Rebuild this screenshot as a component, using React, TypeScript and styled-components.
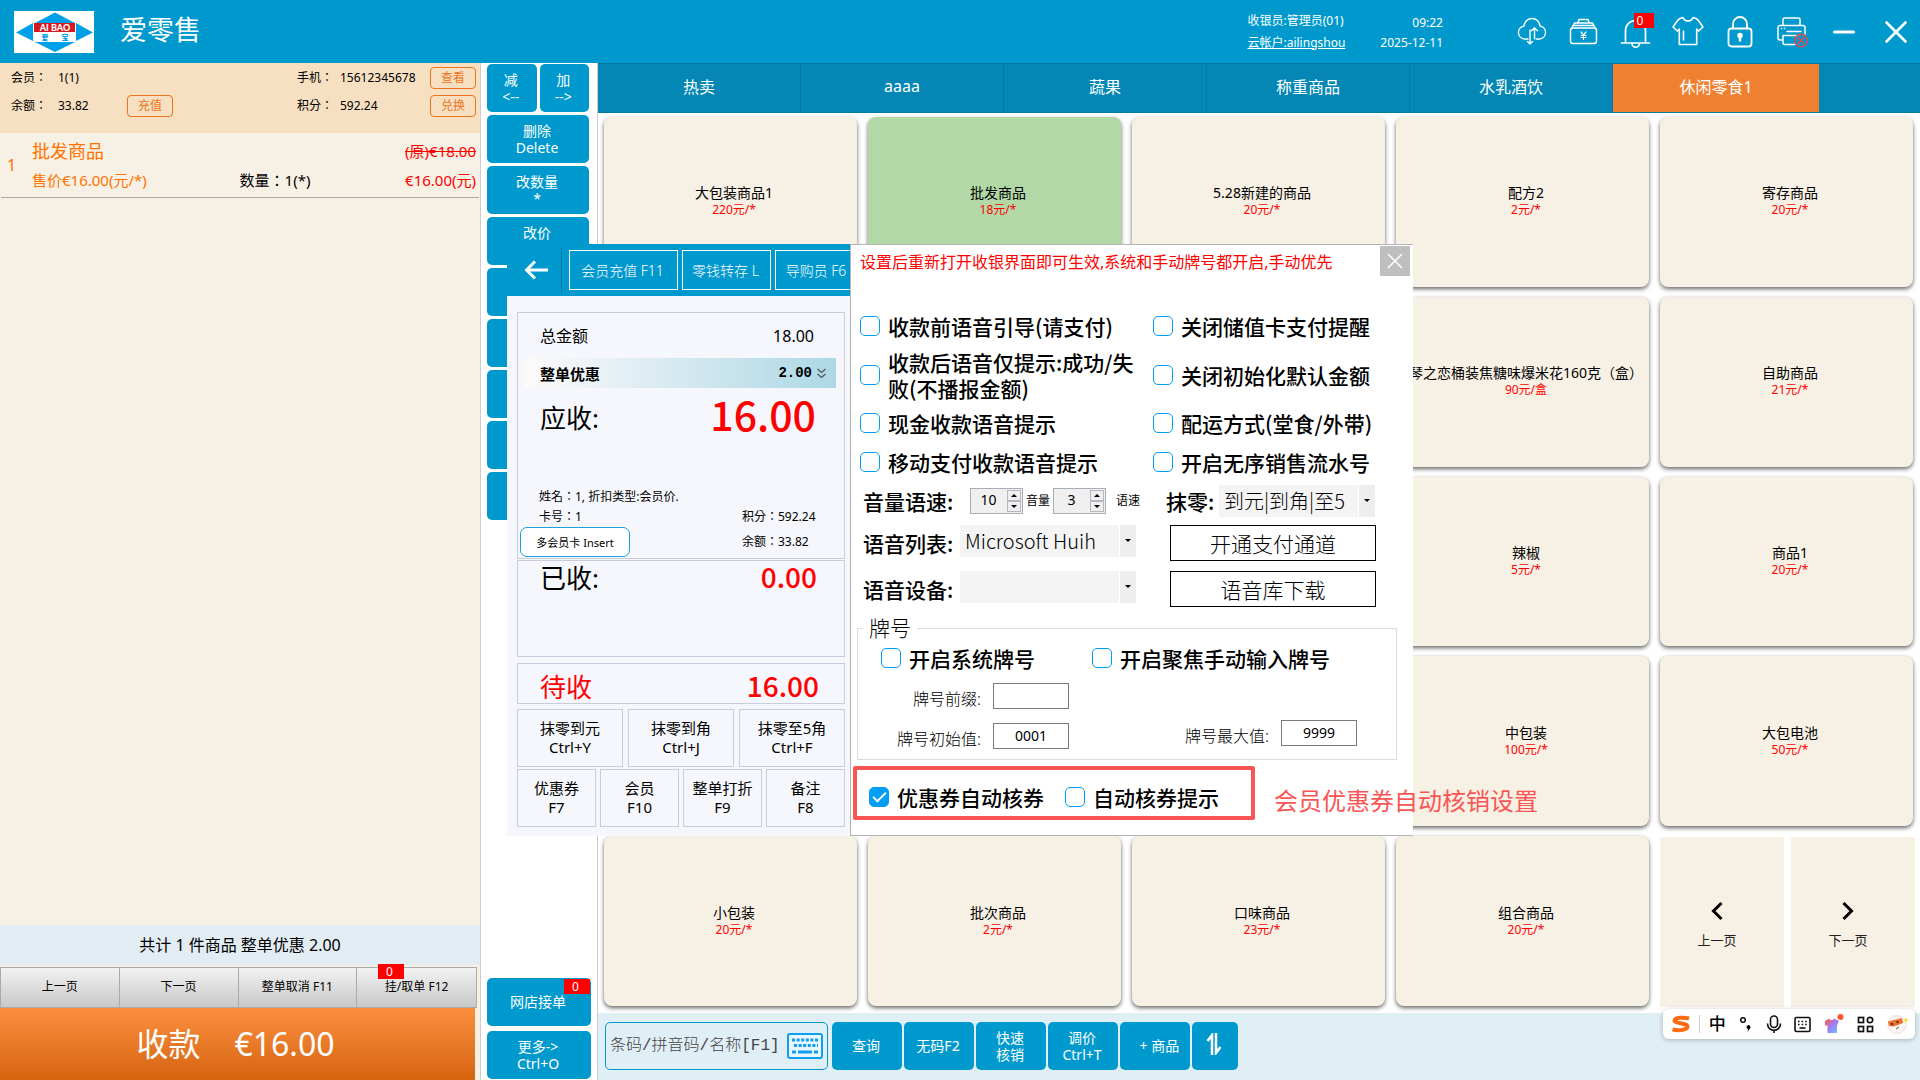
import React, { ReactNode } from "react";
import styled, { createGlobalStyle, css } from "styled-components";

const blue = "#0099ce";
const cream = "#f7f0e4";
const line = "#c9ccda";

const GlobalStyle = createGlobalStyle`
  *, *::before, *::after { box-sizing: border-box; }
  body { margin: 0; overflow: hidden; }
  body, button, input, select {
    font-family: "Noto Sans", "Noto Sans CJK SC", sans-serif;
  }
  button { border: 0; padding: 0; cursor: pointer; }
`;

const Page = styled.div`
  position: relative;
  display: flex;
  flex-direction: column;
  height: 100vh;
  background: #fff;
  color: #000;
  font-size: 14px;
  line-height: 20px;
`;

/* ---------- header ---------- */
const Header = styled.header`
  flex: none;
  display: flex;
  align-items: center;
  height: 63px;
  padding: 0 8px 0 14px;
  background: ${blue};
  color: #fff;
`;
const Logo = styled.svg`
  width: 80px;
  height: 42px;
`;
const Brand = styled.h1`
  flex: 1;
  margin: 0 0 4px 26px;
  font-size: 27px;
  line-height: 36px;
  font-weight: 400;
`;
const HeaderInfo = styled.div<{ $right?: boolean }>`
  display: flex;
  flex-direction: column;
  justify-content: ${(p) => (p.$right ? "flex-end" : "center")};
  gap: ${(p) => (p.$right ? 0 : 2)}px;
  font-size: 12px;
  text-align: ${(p) => (p.$right ? "right" : "left")};
  a { color: #fff; }
`;
const HeaderInfos = styled.div`
  display: flex;
  gap: 35px;
  margin-right: 73px;
`;
const HeaderIcons = styled.nav`
  display: flex;
  gap: 20px;
`;
const IconButton = styled.button`
  position: relative;
  width: 32px;
  height: 32px;
  background: none;
  color: #fff;
  svg { display: block; }
`;
const Badge = styled.span<{ $top: number; $right: number; $wide?: boolean }>`
  position: absolute;
  top: ${(p) => p.$top}px;
  right: ${(p) => p.$right}px;
  width: ${(p) => (p.$wide ? 26 : 20)}px;
  height: 15px;
  background: #f00;
  color: #fff;
  font-size: 12px;
  line-height: 15px;
  text-align: center;
  padding-right: ${(p) => (p.$wide ? 3 : 8)}px;
`;

/* ---------- body columns ---------- */
const Body = styled.div`
  flex: 1;
  min-height: 0;
  display: flex;
`;
const Cart = styled.section`
  flex: none;
  display: flex;
  flex-direction: column;
  width: 481px;
  border-right: 1px solid #ccc;
  background: ${cream};
`;
const Member = styled.div`
  display: grid;
  grid-template-columns: 47px 69px 170px 43px 90px 46px;
  grid-auto-rows: 28px;
  align-items: center;
  height: 70px;
  padding: 1px 4px 0 11px;
  background: #f7e0c1;
  font-family: "Noto Sans", "Noto Sans CJK TC", sans-serif;
  font-size: 12px;
  button { justify-self: start; }
`;
const OutlineButton = styled.button`
  width: 46px;
  height: 22px;
  border: 1px solid #ec7420;
  border-radius: 4px;
  background: transparent;
  color: #ec7420;
  font-size: 12px;
  line-height: 20px;
`;
const CartItem = styled.article`
  display: grid;
  grid-template-columns: 25px 1fr auto 1fr;
  align-items: center;
  height: 65px;
  margin: 0 1px;
  padding: 3px 3px 3px 6px;
  border-bottom: 1px solid #aaa;
  font-family: "Noto Sans", "Noto Sans CJK TC", sans-serif;
  font-size: 15px;
  line-height: 28px;
`;
const ItemNo = styled.span`
  grid-row: span 2;
  color: #ff7300;
  font-size: 16px;
`;
const ItemName = styled.strong`
  grid-column: span 2;
  color: #ff7300;
  font-family: "Noto Sans", "Noto Sans CJK SC", sans-serif;
  font-size: 18px;
  font-weight: 400;
`;
const ItemPrice = styled.span<{ $color: string; $end?: boolean }>`
  color: ${(p) => p.$color};
  text-align: ${(p) => (p.$end ? "right" : "left")};
`;
const Quantity = styled(ItemPrice)`
  padding-left: 42px;
`;
const Summary = styled.div`
  height: 40px;
  margin-top: auto;
  background: #e2edf3;
  font-size: 16px;
  line-height: 40px;
  text-align: center;
`;
const PagerRow = styled.div`
  display: grid;
  grid-template-columns: repeat(4, 1fr);
  height: 41px;
  margin: 2px 3px 0 0;
  border: 1px solid #aaa;
`;
const GreyButton = styled.button`
  position: relative;
  padding-bottom: 3px;
  border-right: 1px solid #aaa;
  background: linear-gradient(#f2f2f2, #c8c8c8);
  font-size: 12px;
  &:last-child { border-right: 0; }
`;
const PayButton = styled.button`
  display: flex;
  align-items: center;
  justify-content: center;
  gap: 34px;
  height: 72px;
  margin-right: 5px;
  padding-right: 4px;
  background: linear-gradient(#fb8f3f, #d56410);
  color: #fff;
  font-size: 32px;
  line-height: 40px;
`;

/* ---------- action column ---------- */
const Actions = styled.section`
  flex: none;
  display: grid;
  grid-template-columns: 1fr 1fr;
  grid-auto-rows: 48px;
  gap: 3px;
  align-content: start;
  width: 117px;
  padding: 1px 8px 0 6px;
  border-right: 1px solid #ccc;
`;
const ActionButton = styled.button<{ $half?: boolean }>`
  position: relative;
  grid-column: ${(p) => (p.$half ? "auto" : "span 2")};
  padding: 0 2px 1px 0;
  border-radius: 5px;
  background: ${blue};
  color: #fff;
  font-size: 14px;
  line-height: 17px;
  white-space: pre-line;
`;
const ActionsColumn = styled.div`
  display: flex;
  flex-direction: column;
`;
const ActionsFoot = styled.div`
  flex: 1;
  display: flex;
  flex-direction: column;
  justify-content: flex-end;
  gap: 5px;
  padding: 0 6px 1px 6px;
  border-right: 1px solid #ccc;
  button { height: 48px; }
`;

/* ---------- catalogue ---------- */
const Catalogue = styled.main`
  flex: 1;
  min-width: 0;
  display: flex;
  flex-direction: column;
`;
const Tabs = styled.nav`
  flex: none;
  display: flex;
  height: 50px;
  border: solid #0577a3;
  border-width: 1px 0;
  background: #0587b5;
`;
const Tab = styled.button<{ $active?: boolean }>`
  width: ${(p) => (p.$active ? 206 : 203)}px;
  padding-bottom: 4px;
  border-right: ${(p) => (p.$active ? "0" : "1px solid #0577a3")};
  background: ${(p) => (p.$active ? "#ef7f31" : "transparent")};
  color: #fff;
  font-size: 16px;
`;
const Tiles = styled.div`
  flex: 1;
  display: grid;
  grid-template-columns: repeat(5, 1fr);
  grid-template-rows: repeat(5, 1fr);
  gap: 10px 11px;
  padding: 4px 7px 7px 6px;
`;
const Tile = styled.button<{ $selected?: boolean }>`
  display: flex;
  flex-direction: column;
  align-items: center;
  justify-content: center;
  min-width: 0;
  padding-left: 7px;
  border-radius: 8px;
  background: ${(p) => (p.$selected ? "#b1d8a6" : cream)};
  box-shadow: 0 2px 4px rgba(0, 0, 0, 0.6);
  font-size: 14px;
  line-height: 17px;
  white-space: nowrap;
  small { color: #f00; font-size: 12px; line-height: 18px; }
`;
const TilePager = styled.div`
  display: grid;
  grid-template-columns: 1fr 1fr;
  gap: 7px;
  margin: 1px -2px -1px 0;
`;
const TilePagerButton = styled.button`
  display: flex;
  flex-direction: column;
  align-items: center;
  justify-content: center;
  gap: 9px;
  padding: 6px 10px 0 0;
  background: ${cream};
  color: #222;
  font-size: 13px;
  line-height: 20px;
`;
const BottomBar = styled.div`
  flex: none;
  display: flex;
  align-items: flex-start;
  gap: 2px;
  height: 67px;
  padding: 9px 7px;
  background: #e0eef5;
  button { width: 70px; height: 48px; }
  button:last-child { width: 46px; }
`;
const SearchBox = styled.label`
  display: flex;
  align-items: center;
  width: 223px;
  height: 48px;
  margin-right: 2px;
  padding: 0 4px;
  border: 1px solid ${blue};
  border-radius: 5px;
`;
const SearchInput = styled.input`
  flex: 1;
  min-width: 0;
  padding: 0;
  border: 0;
  background: none;
  font-family: "Liberation Mono", "Noto Sans CJK SC", monospace;
  font-size: 16px;
  font-weight: 300;
  &::placeholder { color: #444; }
`;

/* ---------- dialogs ---------- */
const Overlay = styled.div`
  position: absolute;
  top: 244px;
  left: 507px;
  display: flex;
  height: 592px;
`;
const Cashier = styled.section`
  width: 343px;
  overflow: hidden;
  background: #f5f7fc;
`;
const CashierBar = styled.div`
  display: flex;
  align-items: center;
  gap: 4px;
  height: 52px;
  background: ${blue};
`;
const BackButton = styled.button`
  flex: none;
  width: 55px;
  height: 46px;
  margin-right: 3px;
  padding-left: 17px;
  border-right: 1px solid #057bad;
  background: none;
  color: #fff;
  svg { display: block; }
`;
const BarButton = styled.button<{ $width: number }>`
  flex: none;
  width: ${(p) => p.$width}px;
  height: 40px;
  padding-right: 2px;
  border: 1px solid #fff;
  background: none;
  color: #fff;
  font-size: 14px;
  font-weight: 300;
`;
const CashierBody = styled.div`
  padding: 16px 5px 0 10px;
`;
const Box = styled.div<{ $height: number; $gap?: number }>`
  height: ${(p) => p.$height}px;
  margin-bottom: ${(p) => p.$gap ?? 0}px;
  border: 1px solid ${line};
`;
const Row = styled.div<{ $height: number; $size: number; $red?: boolean; $end?: number }>`
  display: flex;
  justify-content: space-between;
  align-items: center;
  height: ${(p) => p.$height}px;
  padding: 0 ${(p) => p.$end ?? 30}px 0 22px;
  font-size: ${(p) => p.$size}px;
  color: ${(p) => (p.$red ? "#f00" : "#000")};
`;
const Discount = styled.button`
  display: flex;
  align-items: center;
  width: 312px;
  height: 30px;
  margin: 0 6px;
  padding: 0 10px 0 16px;
  background: linear-gradient(90deg, #fdfafa, #add8e6);
  font-size: 15px;
  font-weight: 700;
  span { flex: 1; text-align: left; }
  b { margin-right: 5px; font-family: "Liberation Mono", monospace; font-size: 14px; }
`;
const Figure = styled.span<{ $size: number }>`
  padding-bottom: ${(p) => (p.$size > 40 ? 10 : 4)}px;
  color: #f00;
  font-family: "Noto Sans CJK SC", sans-serif;
  font-size: ${(p) => p.$size}px;
  font-weight: 500;
  line-height: 48px;
`;
const MemberCard = styled.div`
  display: grid;
  grid-template-columns: 203px 1fr;
  align-items: center;
  margin-top: 39px;
  padding-left: 21px;
  font-family: "Noto Sans", "Noto Sans CJK TC", sans-serif;
  font-size: 12px;
  line-height: 20px;
  p { grid-column: span 2; margin: 0; }
`;
const MultiCard = styled.button`
  width: 110px;
  height: 30px;
  margin-left: -19px;
  border: 1px solid #1ba1e2;
  border-radius: 7px;
  background: #fff;
  font-size: 11px;
`;
const KeyRow = styled.div<{ $cols: number }>`
  display: grid;
  grid-template-columns: repeat(${(p) => p.$cols}, 1fr);
  gap: 4px;
  margin-top: 2px;
  ${(p) => p.$cols === 3 && css`gap: 5px; margin-top: 5px;`}
`;
const KeyButton = styled.button`
  height: 58px;
  padding-bottom: 1px;
  border: 1px solid ${line};
  background: transparent;
  font-size: 15px;
  line-height: 19px;
  white-space: pre-line;
`;

const Settings = styled.section`
  width: 563px;
  border: solid #b4b4b4;
  border-width: 1px 0 1px 1px;
  background: #fff;
`;
const SettingsHead = styled.div`
  display: flex;
  justify-content: space-between;
  height: 61px;
  padding: 1px 3px 0 9px;
  color: #f00;
  font-size: 16px;
  line-height: 32px;
`;
const CloseButton = styled.button`
  width: 30px;
  height: 30px;
  background: #bfbfbf;
  color: #fff;
  svg { display: block; margin: auto; }
`;
const OptionGrid = styled.div`
  display: grid;
  grid-template-columns: 293px 1fr;
  grid-template-rows: 40px 58px 38px 40px 38px 46px 46px;
  align-items: center;
  padding-left: 9px;
`;
const Check = styled.label`
  display: flex;
  align-items: center;
  gap: 8px;
  font-size: 21px;
  font-weight: 500;
  line-height: 26px;
  font-family: "Noto Sans CJK SC", sans-serif;
`;
const CheckInput = styled.input.attrs({ type: "checkbox" })`
  flex: none;
  appearance: none;
  display: grid;
  place-items: center;
  width: 20px;
  height: 20px;
  margin: 0;
  border: 1px solid #009ff5;
  border-radius: 5px;
  background: #fff;
  &:checked { background: #009ff5; }
  &:checked::after {
    content: "";
    width: 13px;
    height: 7px;
    border: solid #fff;
    border-width: 0 0 2px 2px;
    rotate: -45deg;
    margin-bottom: 4px;
  }
`;
const Field = styled.div`
  display: flex;
  align-items: center;
  padding-left: 3px;
`;
const FieldLabel = styled.label<{ $width: number; $indent?: boolean }>`
  width: ${(p) => p.$width}px;
  padding-left: ${(p) => (p.$indent ? 10 : 0)}px;
  font-family: "Noto Sans CJK SC", sans-serif;
  font-size: 21px;
  font-weight: 500;
`;
const UnitLabel = styled.label<{ $wide?: boolean }>`
  width: ${(p) => (p.$wide ? 34 : 30)}px;
  font-size: 12px;
  text-align: ${(p) => (p.$wide ? "right" : "center")};
`;
const Stepper = styled.span`
  display: grid;
  grid-template: 11px 11px / 1fr 14px;
  width: 53px;
  padding: 1px;
  border: 1px solid #a9adb5;
  background: #f0f0f0;
  input {
    grid-row: span 2;
    min-width: 0;
    padding: 0 2px 3px 0;
    border: 0;
    background: none;
    font-size: 14px;
    text-align: center;
  }
  button {
    display: grid;
    place-items: center;
    border: 1px solid #b5b8be;
  }
  svg { display: block; }
`;
const SelectWrap = styled.span<{ $width: number; $raised?: boolean }>`
  position: relative;
  width: ${(p) => p.$width}px;
  height: 32px;
  margin-bottom: ${(p) => (p.$raised ? 5 : 0)}px;
  select {
    appearance: none;
    width: 100%;
    height: 100%;
    padding: 0 18px 0 5px;
    border: 0;
    background: linear-gradient(90deg, #f4f4f4 calc(100% - 17px), #fff calc(100% - 17px), #fff calc(100% - 16px), #eee calc(100% - 16px));
    font-family: "Noto Sans CJK SC", sans-serif;
    font-size: 20px;
    font-weight: 300;
    line-height: 32px;
  }
  svg { position: absolute; right: 5px; top: 14px; pointer-events: none; }
`;
const WideButton = styled.button`
  width: 206px;
  height: 36px;
  margin-left: 17px;
  border: 1px solid #000;
  background: #fff;
  font-size: 21px;
  font-weight: 300;
`;
const PlateSet = styled.fieldset`
  display: grid;
  grid-template-columns: 211px 1fr;
  grid-template-rows: 36px 40px 40px;
  align-items: center;
  width: 540px;
  margin: 4px 0 0 6px;
  padding: 0 28px 3px 23px;
  border: 1px solid #dcdcdc;
  legend { margin-left: -18px; padding: 0 6px; font-size: 21px; font-weight: 300; line-height: 24px; }
`;
const PlateField = styled.label<{ $wide?: boolean }>`
  grid-column: ${(p) => (p.$wide ? "1" : "auto")};
  display: flex;
  align-items: flex-end;
  justify-content: flex-end;
  gap: 12px;
  margin: ${(p) => (p.$wide ? "0 23px 0 0" : "0 11px 6px 0")};
  font-size: 16px;
  font-weight: 300;
  white-space: nowrap;
  input {
    width: 76px;
    height: 26px;
    padding-bottom: 3px;
    border: 1px solid #7a7a7a;
    font-size: 14px;
    text-align: center;
  }
`;
const SettingsFoot = styled.div`
  display: flex;
  align-items: center;
  gap: 19px;
  margin: 6px 0 0 2px;
  white-space: nowrap;
`;
const Highlight = styled.div`
  flex: none;
  display: flex;
  gap: 21px;
  width: 402px;
  height: 54px;
  padding: 14px 0 0 12px;
  border: 4px solid #fa5555;
  border-radius: 2px;
  label { height: 26px; }
`;
const Note = styled.p`
  margin: 15px 0 0;
  color: #fa5555;
  font-size: 24px;
  line-height: 36px;
`;

/* ---------- input-method bar ---------- */
const ImeBar = styled.div`
  position: absolute;
  right: 5px;
  bottom: 41px;
  display: flex;
  align-items: center;
  justify-content: space-between;
  width: 252px;
  height: 30px;
  padding: 0 6px 0 8px;
  border-radius: 6px;
  background: #fff;
  box-shadow: 0 1px 5px rgba(0, 0, 0, 0.25);
  font-size: 17px;
  font-weight: 500;
`;
const ImeLogo = styled.span`
  display: flex;
  padding-right: 8px;
  margin-right: -4px;
  border-right: 1px solid #ccc;
`;

/* ---------- drawings ---------- */
const Icon = ({ children, w = 1.6 }: { children: ReactNode; w?: number }) => (
  <svg width="32" height="32" viewBox="0 0 32 32" fill="none" stroke="currentColor" strokeWidth={w} strokeLinecap="round" strokeLinejoin="round">
    {children}
  </svg>
);
const CloudIcon = () => (
  <Icon w={1.4}>
    <path d="M12 23H8.500a6.500 6.500 0 0 1-.6-12.900C8.500 5.500 12 2.500 16 2.500s7.500 3 8.100 7.600A6.500 6.500 0 0 1 23.500 23H20" />
    <path d="M14 14v14M11.500 25.500L14 28l2.500-2.500M18.500 22.500V12M15.500 14.700l3-3 3 3" />
  </Icon>
);
const PurseIcon = () => (
  <Icon w={1.5}>
    <rect x="2.500" y="12" width="26" height="15.500" rx="2.500" />
    <path d="M4 11.500l2.500-4.500h18l2.500 4.500M5 9.500h21M10 6.500l1-3h9l1 3" />
    <path d="M13 16l2.500 3 2.500-3M15.500 19v4.500M13 19.500h5M13 21.500h5" strokeWidth="1.200" />
  </Icon>
);
const BellIcon = () => (
  <Icon w={1.7}>
    <path d="M1.500 27h28M5.500 27V14.500a10 10 0 0 1 20 0V27M12 27.500a3.700 3.700 0 0 0 7.400 0" />
  </Icon>
);
const ShirtIcon = () => (
  <Icon w={1.6}>
    <path d="M11 1.500c1.500 4.500 8.500 4.500 10 0 3 .3 4.500 1.500 5.800 3.500L31 11l-4.500 4-1.800-2v15.500H7.300V13l-1.800 2L1 11l4.200-6C6.500 3 8 1.800 11 1.500zM11.500 15v9" />
  </Icon>
);
const LockIcon = () => (
  <Icon w={1.8}>
    <rect x="4.500" y="12.500" width="23" height="18" rx="3" />
    <path d="M9 12V8a7 7 0 0 1 14 0v4" />
    <path d="M16 19.500v5" strokeWidth="2.500" />
    <circle cx="16" cy="19.500" r="1.800" fill="currentColor" />
  </Icon>
);
const PrinterIcon = () => (
  <Icon w={1.5}>
    <path d="M7 9V3.500A1.500 1.500 0 0 1 8.500 2h14A1.500 1.500 0 0 1 24 3.500V9M5.500 24H4a2 2 0 0 1-2-2V11.500a2 2 0 0 1 2-2h23a2 2 0 0 1 2 2V18M19 28.500H8.500A1.500 1.500 0 0 1 7 27v-7.500h15M11 15.500h14" />
    <path d="M5.500 12.500h.1M8.500 12.500h.1" />
    <g stroke="#e8474f" strokeWidth="1.400">
      <circle cx="25" cy="24.500" r="6.300" />
      <path d="M22.300 21.800l5.400 5.400M27.700 21.800l-5.400 5.400" />
    </g>
  </Icon>
);
const Caret = ({ up = false }: { up?: boolean }) => (
  <svg width="6" height="3" viewBox="0 0 6 3"><path d={up ? "M0 3L3 0l3 3z" : "M0 0h6L3 3z"} /></svg>
);
const Chevron = ({ d }: { d: string }) => (
  <svg width="14" height="20" viewBox="0 0 14 20" fill="none" stroke="#000" strokeWidth="3"><path d={d} /></svg>
);
const KeyboardIcon = () => (
  <svg width="36" height="26" viewBox="0 0 36 26">
    <rect x="1" y="1" width="34" height="24" rx="2" fill="#e9f6fd" stroke="#0f9ff0" strokeWidth="2" />
    <g stroke="#0f9ff0" strokeWidth="3">
      <path d="M5 7h26" strokeDasharray="3 1.600" />
      <path d="M7 12.500h24" strokeDasharray="3 1.600" />
      <path d="M5 19h4M11 19h14M27 19h4" />
    </g>
  </svg>
);

type Product = { name: string; price: string; selected?: boolean } | null;
const products: Product[] = [
  { name: "大包装商品1", price: "220元/*" },
  { name: "批发商品", price: "18元/*", selected: true },
  { name: "5.28新建的商品", price: "20元/*" },
  { name: "配方2", price: "2元/*" },
  { name: "寄存商品", price: "20元/*" },
  null, null, null,
  { name: "琴之恋桶装焦糖味爆米花160克（盒）", price: "90元/盒" },
  { name: "自助商品", price: "21元/*" },
  null, null, null,
  { name: "辣椒", price: "5元/*" },
  { name: "商品1", price: "20元/*" },
  null, null, null,
  { name: "中包装", price: "100元/*" },
  { name: "大包电池", price: "50元/*" },
  { name: "小包装", price: "20元/*" },
  { name: "批次商品", price: "2元/*" },
  { name: "口味商品", price: "23元/*" },
  { name: "组合商品", price: "20元/*" },
];
const tabs = ["热卖", "aaaa", "蔬果", "称重商品", "水乳酒饮", "休闲零食1"];
const options = [
  "收款前语音引导(请支付)", "关闭储值卡支付提醒",
  "收款后语音仅提示:成功/失败(不播报金额)", "关闭初始化默认金额",
  "现金收款语音提示", "配运方式(堂食/外带)",
  "移动支付收款语音提示", "开启无序销售流水号",
];

const CheckOption = ({ text, checked }: { text: string; checked?: boolean }) => (
  <Check><CheckInput defaultChecked={checked} />{text}</Check>
);
const NumberStepper = ({ id, value }: { id: string; value: string }) => (
  <Stepper>
    <input id={id} defaultValue={value} />
    <button aria-label="+"><Caret up /></button>
    <button aria-label="-"><Caret /></button>
  </Stepper>
);
const Dropdown = ({ id, width, value, raised }: { id: string; width: number; value: string; raised?: boolean }) => (
  <SelectWrap $width={width} $raised={raised}>
    <select id={id}><option>{value}</option></select>
    <Caret />
  </SelectWrap>
);

const TopBar = () => (
  <Header>
    <Logo viewBox="0 0 80 42">
      <path fill="#fff" d="M0 0h80v42H0z" />
      <path fill="#00a0e9" d="M41 1.500L61 12H21zM41 41L21 31h40zM19 12v18L2 21.500zM62 12v18l17-8.500z" />
      <path fill="#d7191f" d="M20 12h41v9H20z" />
      <g fontFamily="Lato, sans-serif" fontWeight="900" textAnchor="middle">
        <text x="41" y="19.500" fontSize="9" fill="#fff">AI BAO</text>
        <text x="31" y="29" fontSize="7" fill="#00a0e9" fontFamily="Noto Sans CJK SC">爱</text>
        <text x="51" y="29" fontSize="7" fill="#00a0e9" fontFamily="Noto Sans CJK SC">宝</text>
      </g>
    </Logo>
    <Brand>爱零售</Brand>
    <HeaderInfos>
      <HeaderInfo><span>收银员:管理员(01)</span><a href="#account">云帐户:ailingshou</a></HeaderInfo>
      <HeaderInfo $right><span>09:22</span><span>2025-12-11</span></HeaderInfo>
    </HeaderInfos>
    <HeaderIcons>
      <IconButton><CloudIcon /></IconButton>
      <IconButton><PurseIcon /></IconButton>
      <IconButton><BellIcon /><Badge $top={-3} $right={-2}>0</Badge></IconButton>
      <IconButton><ShirtIcon /></IconButton>
      <IconButton><LockIcon /></IconButton>
      <IconButton><PrinterIcon /></IconButton>
      <IconButton><Icon w={3}><path d="M6.500 16h19" /></Icon></IconButton>
      <IconButton><Icon w={2.6}><path d="M6.500 6.500l19 19M25.500 6.500l-19 19" /></Icon></IconButton>
    </HeaderIcons>
  </Header>
);

const CartPanel = () => (
  <Cart>
    <Member>
      <span>会员：</span><span>1(1)</span><span /><span>手机：</span><span>15612345678</span><OutlineButton>查看</OutlineButton>
      <span>余额：</span><span>33.82</span><OutlineButton>充值</OutlineButton><span>积分：</span><span>592.24</span><OutlineButton>兑换</OutlineButton>
    </Member>
    <CartItem>
      <ItemNo>1</ItemNo>
      <ItemName>批发商品</ItemName>
      <ItemPrice as="s" $color="#f00" $end>(原)€18.00</ItemPrice>
      <ItemPrice $color="#ff7300">售价€16.00(元/*)</ItemPrice>
      <Quantity $color="#000">数量：1(*)</Quantity>
      <ItemPrice $color="#f00" $end>€16.00(元)</ItemPrice>
    </CartItem>
    <Summary>共计 1 件商品 整单优惠 2.00</Summary>
    <PagerRow>
      <GreyButton>上一页</GreyButton>
      <GreyButton>下一页</GreyButton>
      <GreyButton>整单取消 F11</GreyButton>
      <GreyButton>挂/取单 F12<Badge $wide $top={-4} $right={72}>0</Badge></GreyButton>
    </PagerRow>
    <PayButton><span>收款</span><span>€16.00</span></PayButton>
  </Cart>
);

const CashierDialog = () => (
  <Cashier>
    <CashierBar>
      <BackButton aria-label="返回">
        <svg width="24" height="20" viewBox="0 0 24 20" fill="none" stroke="currentColor" strokeWidth="3"><path d="M24 10H3M11 1.500L2.500 10l8.500 8.500" /></svg>
      </BackButton>
      <BarButton $width={109}>会员充值 F11</BarButton>
      <BarButton $width={89}>零钱转存 L</BarButton>
      <BarButton $width={84}>导购员 F6</BarButton>
    </CashierBar>
    <CashierBody>
      <Box $height={247} $gap={1}>
        <Row $height={45} $size={16}><span>总金额</span><span>18.00</span></Row>
        <Discount>
          <span>整单优惠</span><b>2.00</b>
          <svg width="9" height="11" viewBox="0 0 9 11" fill="none" stroke="#555" strokeWidth="1.300"><path d="M.5 1l4 3.500 4-3.500M.5 6l4 3.500 4-3.500" /></svg>
        </Discount>
        <Row $height={60} $size={26} $end={28}><span>应收:</span><Figure $size={41}>16.00</Figure></Row>
        <MemberCard>
          <p>姓名：1, 折扣类型:会员价.</p>
          <span>卡号：1</span><span>积分：592.24</span>
          <MultiCard>多会员卡 Insert</MultiCard><span>余额：33.82</span>
        </MemberCard>
      </Box>
      <Box $height={97} $gap={6}>
        <Row $height={34} $size={26} $end={27}><span>已收:</span><Figure $size={28}>0.00</Figure></Row>
      </Box>
      <Box $height={41}>
        <Row $height={46} $size={26} $red $end={25}><span>待收</span><Figure $size={28}>16.00</Figure></Row>
      </Box>
      <KeyRow $cols={3}>
        {["抹零到元\nCtrl+Y", "抹零到角\nCtrl+J", "抹零至5角\nCtrl+F"].map((t) => <KeyButton key={t}>{t}</KeyButton>)}
      </KeyRow>
      <KeyRow $cols={4}>
        {["优惠券\nF7", "会员\nF10", "整单打折\nF9", "备注\nF8"].map((t) => <KeyButton key={t}>{t}</KeyButton>)}
      </KeyRow>
    </CashierBody>
  </Cashier>
);

const SettingsDialog = () => (
  <Settings>
    <SettingsHead>
      <span>设置后重新打开收银界面即可生效,系统和手动牌号都开启,手动优先</span>
      <CloseButton aria-label="关闭">
        <svg width="16" height="16" viewBox="0 0 16 16" stroke="currentColor" strokeWidth="1.500"><path d="M1 1l14 14M15 1L1 15" /></svg>
      </CloseButton>
    </SettingsHead>
    <OptionGrid>
      {options.map((o) => <CheckOption key={o} text={o} />)}
      <Field>
        <FieldLabel $width={107} htmlFor="volume">音量语速:</FieldLabel>
        <NumberStepper id="volume" value="10" /><UnitLabel htmlFor="volume">音量</UnitLabel>
        <NumberStepper id="speed" value="3" /><UnitLabel $wide htmlFor="speed">语速</UnitLabel>
      </Field>
      <Field>
        <FieldLabel $width={63} $indent htmlFor="rounding">抹零:</FieldLabel>
        <Dropdown id="rounding" width={156} value="到元|到角|至5" />
      </Field>
      <Field>
        <FieldLabel $width={97} htmlFor="voice">语音列表:</FieldLabel>
        <Dropdown id="voice" width={176} value="Microsoft Huih" raised />
      </Field>
      <WideButton>开通支付通道</WideButton>
      <Field>
        <FieldLabel $width={97} htmlFor="device">语音设备:</FieldLabel>
        <Dropdown id="device" width={176} value="" raised />
      </Field>
      <WideButton>语音库下载</WideButton>
    </OptionGrid>
    <PlateSet>
      <legend>牌号</legend>
      <CheckOption text="开启系统牌号" />
      <CheckOption text="开启聚焦手动输入牌号" />
      <PlateField $wide>牌号前缀:<input /></PlateField>
      <span />
      <PlateField $wide>牌号初始值:<input defaultValue="0001" /></PlateField>
      <PlateField>牌号最大值:<input defaultValue="9999" /></PlateField>
    </PlateSet>
    <SettingsFoot>
      <Highlight>
        <CheckOption text="优惠券自动核券" checked />
        <CheckOption text="自动核券提示" />
      </Highlight>
      <Note>会员优惠券自动核销设置</Note>
    </SettingsFoot>
  </Settings>
);

const Ime = () => (
  <ImeBar>
    <ImeLogo>
      <svg width="20" height="18" viewBox="0 0 20 18" fill="none" stroke="#ff6a13" strokeWidth="4"><path d="M18 3.500C12 2 4 2.500 3.500 5.500S16.500 8 16.500 11.500 8 16 1.500 14.500" /></svg>
    </ImeLogo>
    <span>中</span>
    <svg width="14" height="18" viewBox="0 0 14 18"><circle cx="4" cy="5" r="2.300" fill="none" stroke="#111" strokeWidth="1.500" /><path d="M7.500 12a2 2 0 1 1 3.600 1.300L8.500 17l.5-3a2 2 0 0 1-1.500-2z" /></svg>
    <svg width="16" height="20" viewBox="0 0 16 20" fill="none" stroke="#111" strokeWidth="1.600"><rect x="4.500" y="2" width="7" height="11.500" rx="3.500" /><path d="M1.500 9.500c0 9 13 9 13 0M8 16v3" /></svg>
    <svg width="17" height="17" viewBox="0 0 17 17" fill="none" stroke="#111" strokeWidth="1.600"><rect x="1" y="1.500" width="15" height="14" rx="1.500" /><path d="M4 5.500h9M4 8.500h9" strokeDasharray="1.600 2" /><path d="M5.500 12h6" /></svg>
    <svg width="20" height="20" viewBox="0 0 20 20">
      <defs><linearGradient id="tee" x1="0" y1="0" x2="1" y2="1"><stop offset="0" stopColor="#ff5b3a" /><stop offset=".5" stopColor="#a27bf5" /><stop offset="1" stopColor="#5bd0ff" /></linearGradient></defs>
      <path fill="url(#tee)" d="M1 7l4-2.500c1 2 4 2 5 0L15 7l-2 4.500V19H3.500v-7.500H1z" /><circle cx="16.500" cy="3" r="3" fill="#ff5630" />
    </svg>
    <svg width="17" height="17" viewBox="0 0 17 17" fill="none" stroke="#111" strokeWidth="1.700"><rect x="1.500" y="1.500" width="5" height="5" /><circle cx="13" cy="4" r="2.700" /><rect x="1.500" y="10.500" width="5" height="5" /><rect x="10.500" y="10.500" width="5" height="5" /></svg>
    <svg width="22" height="22" viewBox="0 0 22 22"><circle cx="10" cy="11.500" r="9" fill="#fdf6f4" stroke="#eeded9" /><path d="M1 8.500L15 5l1 5-9 3.500-5-.5z" fill="#f0702a" /><path d="M4 10.500l2 1M9.500 8.500l2 1" stroke="#322" strokeWidth="1.600" /><path d="M9 16l3-2" stroke="#555" /><path d="M19 4l1 2.500 2 .5-2 1-1 2.500-1-2.500-2-1 2-.5z" fill="#ffd93b" /></svg>
  </ImeBar>
);

export default function App() {
  return (
    <Page>
      <GlobalStyle />
      <TopBar />
      <Body>
        <CartPanel />
        <ActionsColumn>
          <Actions>
            <ActionButton $half>{"减\n<--"}</ActionButton>
            <ActionButton $half>{"加\n-->"}</ActionButton>
            <ActionButton>{"删除\nDelete"}</ActionButton>
            <ActionButton>{"改数量\n*"}</ActionButton>
            <ActionButton>{"改价\n\u00a0"}</ActionButton>
            {[0, 1, 2, 3, 4].map((n) => <ActionButton key={n} />)}
          </Actions>
          <ActionsFoot>
            <ActionButton>网店接单<Badge $wide $top={1} $right={1}>0</Badge></ActionButton>
            <ActionButton>{"更多->\nCtrl+O"}</ActionButton>
          </ActionsFoot>
        </ActionsColumn>
        <Catalogue>
          <Tabs>{tabs.map((t, i) => <Tab key={t} $active={i === 5}>{t}</Tab>)}</Tabs>
          <Tiles>
            {products.map((p, i) => (
              <Tile key={i} $selected={p?.selected}>{p && <>{p.name}<small>{p.price}</small></>}</Tile>
            ))}
            <TilePager>
              <TilePagerButton><Chevron d="M11.500 2L3.500 10l8 8" />上一页</TilePagerButton>
              <TilePagerButton><Chevron d="M2.500 2l8 8-8 8" />下一页</TilePagerButton>
            </TilePager>
          </Tiles>
          <BottomBar>
            <SearchBox><SearchInput placeholder="条码/拼音码/名称[F1]" /><KeyboardIcon /></SearchBox>
            <ActionButton>查询</ActionButton>
            <ActionButton>无码F2</ActionButton>
            <ActionButton>{"快速\n核销"}</ActionButton>
            <ActionButton>{"调价\nCtrl+T"}</ActionButton>
            <ActionButton>&nbsp;&nbsp;&nbsp;+ 商品</ActionButton>
            <ActionButton aria-label="排序">
              <svg width="16" height="22" viewBox="0 0 16 22" fill="none" stroke="#fff" strokeWidth="2.500"><path d="M6 22V2L1.500 8M10 0v20l4.500-6" /></svg>
            </ActionButton>
          </BottomBar>
        </Catalogue>
      </Body>
      <Overlay><CashierDialog /><SettingsDialog /></Overlay>
      <Ime />
    </Page>
  );
}
